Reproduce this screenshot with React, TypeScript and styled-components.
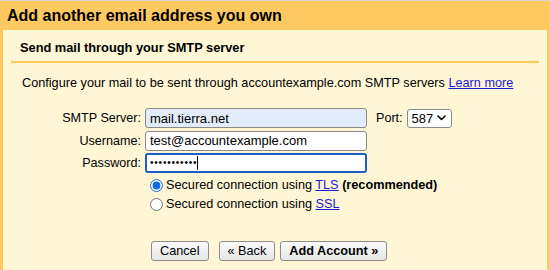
import React from 'react';
import styled, { createGlobalStyle } from 'styled-components';

const GlobalStyle = createGlobalStyle`
  html, body {
    margin: 0;
    padding: 0;
    background: #fff6d6;
  }
  body {
    font-family: "Liberation Sans", Arial, sans-serif;
    color: #000;
  }
`;

const Frame = styled.div`
  width: 549px;
  height: 270px;
  box-sizing: border-box;
  border-top: 1px solid #d6d6d6;
  background: #ffc961;
  padding: 0 2px 0 3px;
  display: flex;
  flex-direction: column;
  overflow: hidden;
`;

const Title = styled.h1`
  margin: 0;
  height: 29px;
  line-height: 29px;
  padding-left: 4px;
  font-size: 16px;
  font-weight: bold;
`;

const Panel = styled.div`
  flex: 1;
  background: #fff6d6;
  padding: 10px 8px 0 8px;
`;

const SubTitle = styled.h2`
  margin: 0;
  padding-left: 9px;
  font-size: 12.8px;
  line-height: 16px;
  font-weight: bold;
  padding-bottom: 5px;
  border-bottom: 2px solid #ffc961;
`;

const Intro = styled.p`
  margin: 12px 0 0 11px;
  font-size: 12.7px;
  line-height: 16px;
`;

const Link = styled.a`
  color: #1a1ad6;
  text-decoration: underline;
  cursor: pointer;
`;

const Form = styled.div`
  margin: 17px 0 0 11px;
  display: grid;
  grid-template-columns: 119px 222px auto;
  column-gap: 4px;
  row-gap: 2.5px;
  align-items: center;
  font-size: 12.6px;
`;

const Label = styled.label`
  text-align: right;
  white-space: nowrap;
`;

const Field = styled.input<{ $filled?: boolean }>`
  box-sizing: border-box;
  height: 20px;
  width: 222px;
  margin: 0;
  padding: 0 4px;
  border: 1px solid #8a8a8a;
  border-radius: 3px;
  background: ${(p) => (p.$filled ? '#e3ecfa' : '#fff')};
  font-family: "Liberation Sans", Arial, sans-serif;
  font-size: 13px;
  color: #000;
  outline: none;
`;

const FocusedField = styled.div`
  box-sizing: border-box;
  height: 20px;
  width: 222px;
  border: 2px solid #1f5dc6;
  border-radius: 3px;
  background: #fff;
  display: flex;
  align-items: center;
  padding-left: 3px;
`;

const Dots = styled.span`
  font-size: 10px;
  letter-spacing: 0.8px;
  line-height: 1;
`;

const Caret = styled.span`
  width: 1px;
  height: 14px;
  background: #000;
`;

const PortCell = styled.div`
  display: flex;
  align-items: center;
  gap: 4px;
  padding-left: 5px;
`;

const Select = styled.div`
  box-sizing: border-box;
  height: 19px;
  width: 45px;
  border: 1px solid #8a8a8a;
  border-radius: 3px;
  background: #fff;
  display: flex;
  align-items: center;
  justify-content: space-between;
  padding: 0 5px 0 4px;
  font-size: 13px;
`;

const Options = styled.div`
  margin: 3px 0 0 134px;
  display: flex;
  flex-direction: column;
  font-size: 12.7px;
`;

const OptionRow = styled.label`
  display: flex;
  align-items: center;
  height: 19px;
  line-height: 15px;
`;

const Radio = styled.input`
  margin: 0 3px 0 5px;
  width: 13px;
  height: 13px;
  accent-color: #0f6ce6;
`;

const Buttons = styled.div`
  margin: 27px 0 0 140px;
  display: flex;
  align-items: center;
`;

const Button = styled.button<{ $primary?: boolean; $gap?: number }>`
  box-sizing: border-box;
  height: 20px;
  margin: 0 ${(p) => p.$gap ?? 0}px 0 0;
  padding: 0 8px;
  border: 1px solid #8c8c8c;
  border-radius: 3px;
  background: linear-gradient(#fbfbfb, #e6e6e6);
  font-family: "Liberation Sans", Arial, sans-serif;
  font-size: 12.7px;
  font-weight: ${(p) => (p.$primary ? 'bold' : 'normal')};
  color: #000;
  line-height: 18px;
`;

const Chevron = () => (
  <svg width="9" height="6" viewBox="0 0 9 6">
    <path d="M1 1l3.5 3.5L8 1" fill="none" stroke="#000" strokeWidth="1.6" strokeLinecap="round" strokeLinejoin="round" />
  </svg>
);

export default function App() {
  return (
    <>
      <GlobalStyle />
      <Frame>
        <Title>Add another email address you own</Title>
        <Panel>
          <SubTitle>Send mail through your SMTP server</SubTitle>
          <Intro>
            Configure your mail to be sent through accountexample.com SMTP servers <Link>Learn more</Link>
          </Intro>
          <Form>
            <Label>SMTP Server:</Label>
            <Field $filled readOnly value="mail.tierra.net" />
            <PortCell>
              <span>Port:</span>
              <Select>
                <span>587</span>
                <Chevron />
              </Select>
            </PortCell>
            <Label>Username:</Label>
            <Field readOnly value="test@accountexample.com" />
            <span />
            <Label>Password:</Label>
            <FocusedField>
              <Dots>•••••••••••</Dots>
              <Caret />
            </FocusedField>
            <span />
          </Form>
          <Options>
            <OptionRow>
              <Radio type="radio" name="sec" defaultChecked />
              <span>
                Secured connection using <Link>TLS</Link> <b>(recommended)</b>
              </span>
            </OptionRow>
            <OptionRow>
              <Radio type="radio" name="sec" />
              <span>
                Secured connection using <Link>SSL</Link>
              </span>
            </OptionRow>
          </Options>
          <Buttons>
            <Button $gap={10}>Cancel</Button>
            <Button $gap={5}>« Back</Button>
            <Button $primary>Add Account »</Button>
          </Buttons>
        </Panel>
      </Frame>
    </>
  );
}
